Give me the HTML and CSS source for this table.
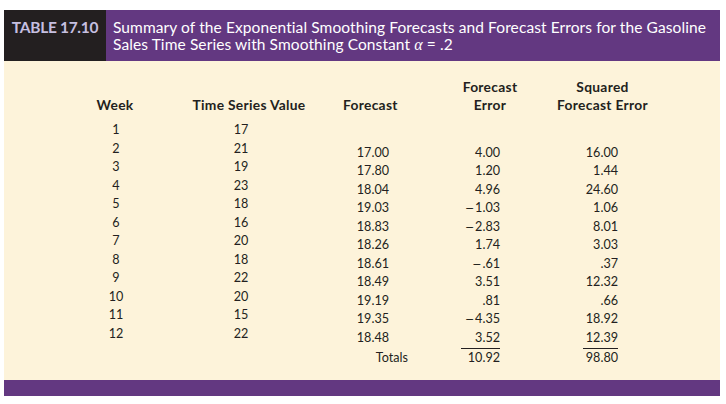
FILE: index.html
```html
<!DOCTYPE html>
<html>
<head>
<meta charset="utf-8">
<link rel="stylesheet" href="styles.css">
</head>
<body>
<div class="panel">
  <div class="caption">
    <div class="label">TABLE 17.10</div>
    <div class="title">Summary of the Exponential Smoothing Forecasts and Forecast Errors for the Gasoline<br>Sales Time Series with Smoothing Constant <span class="alpha">α</span> = .2</div>
  </div>
  <div class="content">
    <div class="heads">
      <div class="head col-a">Week</div>
      <div class="head col-b">Time Series Value</div>
      <div class="head col-c">Forecast</div>
      <div class="head col-d"><span>Forecast</span><span>Error</span></div>
      <div class="head col-e"><span>Squared</span><span>Forecast Error</span></div>
    </div>
    <div class="cols">
      <div class="col col-a">
        <div class="cell">1</div><div class="cell">2</div><div class="cell">3</div><div class="cell">4</div>
        <div class="cell">5</div><div class="cell">6</div><div class="cell">7</div><div class="cell">8</div>
        <div class="cell">9</div><div class="cell">10</div><div class="cell">11</div><div class="cell">12</div>
      </div>
      <div class="col col-b">
        <div class="cell">17</div><div class="cell">21</div><div class="cell">19</div><div class="cell">23</div>
        <div class="cell">18</div><div class="cell">16</div><div class="cell">20</div><div class="cell">18</div>
        <div class="cell">22</div><div class="cell">20</div><div class="cell">15</div><div class="cell">22</div>
      </div>
      <div class="col col-c shifted">
        <div class="cell"></div>
        <div class="cell">17.00</div><div class="cell">17.80</div><div class="cell">18.04</div><div class="cell">19.03</div>
        <div class="cell">18.83</div><div class="cell">18.26</div><div class="cell">18.61</div><div class="cell">18.49</div>
        <div class="cell">19.19</div><div class="cell">19.35</div><div class="cell">18.48</div>
        <div class="cell total-label">Totals</div>
      </div>
      <div class="col col-d shifted">
        <div class="cell"></div>
        <div class="cell">4.00</div><div class="cell">1.20</div><div class="cell">4.96</div><div class="cell"><span class="minus">−</span>1.03</div>
        <div class="cell"><span class="minus">−</span>2.83</div><div class="cell">1.74</div><div class="cell"><span class="minus">−</span>.61</div><div class="cell">3.51</div>
        <div class="cell">.81</div><div class="cell"><span class="minus">−</span>4.35</div><div class="cell">3.52</div>
        <div class="cell total"><span class="sum sum-d">10.92</span></div>
      </div>
      <div class="col col-e shifted">
        <div class="cell"></div>
        <div class="cell">16.00</div><div class="cell">1.44</div><div class="cell">24.60</div><div class="cell">1.06</div>
        <div class="cell">8.01</div><div class="cell">3.03</div><div class="cell">.37</div><div class="cell">12.32</div>
        <div class="cell">.66</div><div class="cell">18.92</div><div class="cell">12.39</div>
        <div class="cell total"><span class="sum sum-e">98.80</span></div>
      </div>
    </div>
  </div>
  <div class="footer"></div>
</div>
</body>
</html>
```

FILE: styles.css
```css
html, body {
  margin: 0;
  padding: 0;
  background: #ffffff;
}

body {
  font-family: "Lato", "Open Sans", sans-serif;
  color: #231f20;
}

.panel {
  width: 716px;
  margin: 10px 0 0 4px;
}

.caption {
  display: flex;
  height: 51px;
  background: #633881;
}

.label {
  width: 102px;
  background: #231f20;
  color: #c6bfe0;
  font-weight: 700;
  font-size: 15.5px;
  letter-spacing: -0.3px;
  line-height: 17.5px;
  padding-top: 8.75px;
  box-sizing: border-box;
  text-align: center;
}

.title {
  padding: 8.75px 0 0 7px;
  color: #ffffff;
  font-size: 15.5px;
  line-height: 17.5px;
  letter-spacing: 0.1px;
  white-space: nowrap;
}

.alpha {
  font-family: "Liberation Serif", serif;
  font-style: italic;
  font-size: 16px;
}

.content {
  background: #fdf3da;
  padding: 17px 0 13px 0;
}

.heads {
  display: flex;
  height: 36px;
  font-weight: 700;
  font-size: 13.8px;
  letter-spacing: 0.3px;
  line-height: 18px;
}

.head {
  display: flex;
  flex-direction: column;
  justify-content: flex-end;
  align-items: center;
  white-space: nowrap;
}

.head.col-c {
  align-items: flex-start;
}

.cols {
  display: flex;
  align-items: flex-start;
  margin-top: 7px;
  font-size: 12.6px;
  line-height: 18.5px;
}

.col-a { width: 90px; margin-left: 66px; }
.col-b { width: 138px; margin-left: 20px; }
.col-c { width: 65px; margin-left: 25px; }
.col-d { width: 80px; margin-left: 42px; }
.col-e { width: 115px; margin-left: 15px; }

.col.col-a .cell { text-align: center; padding-left: 2px; }
.col.col-b .cell { text-align: center; padding-right: 16px; }
.col.col-c .cell { text-align: right; padding-right: 19px; }
.col.col-d .cell { text-align: right; padding-right: 30px; }
.col.col-e .cell { text-align: right; padding-right: 42px; }

.shifted {
  margin-top: 4px;
}

.cell {
  height: 18.5px;
  white-space: nowrap;
}

.minus {
  font-family: "DejaVu Sans", sans-serif;
  font-size: 11px;
  margin-right: 1px;
}

.col.col-c .total-label {
  padding-right: 0;
  margin-top: 2px;
  height: 18px;
  line-height: 18px;
}

.total {
  margin-top: 1px;
  height: 19px;
  line-height: 18px;
}

.sum {
  display: inline-block;
  border-top: 1px solid #231f20;
}

.sum-d { padding-left: 7px; }
.sum-e { padding-left: 3px; }

.footer {
  height: 16px;
  background: #633881;
}
```
